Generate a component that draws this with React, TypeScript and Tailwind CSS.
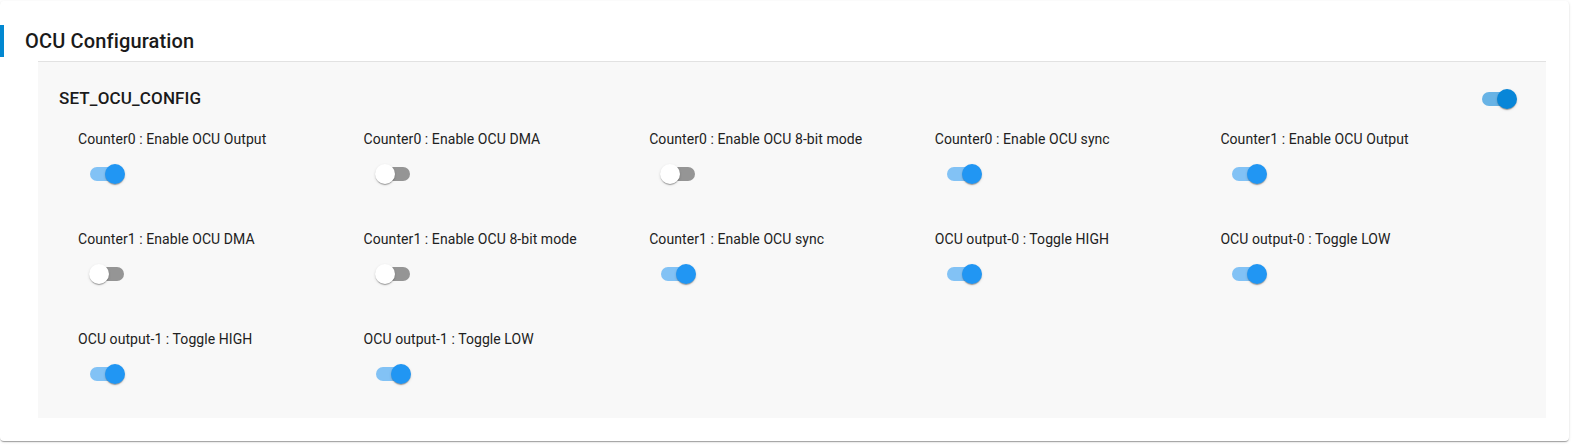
type SwitchProps = { on: boolean; dark?: boolean };

function Toggle({ on, dark }: SwitchProps) {
  const thumbOn = dark ? "bg-[#0886d8]" : "bg-[#2196f3]";
  const trackOn = dark ? "bg-[#0886d8]/60" : "bg-[#2196f3]/55";
  return (
    <div className="relative w-[58px] h-[38px] shrink-0">
      <div
        className={
          "absolute left-[12px] top-[12px] w-[34px] h-[14px] rounded-full " +
          (on ? trackOn : "bg-black/40")
        }
      />
      <div
        className={
          "absolute top-[9px] w-[20px] h-[20px] rounded-full shadow-[0_2px_1px_-1px_rgba(0,0,0,0.2),0_1px_1px_0_rgba(0,0,0,0.14),0_1px_3px_0_rgba(0,0,0,0.12)] " +
          (on ? "left-[27px] " + thumbOn : "left-[11px] bg-white")
        }
      />
    </div>
  );
}

const items: { label: string; on: boolean }[] = [
  { label: "Counter0 : Enable OCU Output", on: true },
  { label: "Counter0 : Enable OCU DMA", on: false },
  { label: "Counter0 : Enable OCU 8-bit mode", on: false },
  { label: "Counter0 : Enable OCU sync", on: true },
  { label: "Counter1 : Enable OCU Output", on: true },
  { label: "Counter1 : Enable OCU DMA", on: false },
  { label: "Counter1 : Enable OCU 8-bit mode", on: false },
  { label: "Counter1 : Enable OCU sync", on: true },
  { label: "OCU output-0 : Toggle HIGH", on: true },
  { label: "OCU output-0 : Toggle LOW", on: true },
  { label: "OCU output-1 : Toggle HIGH", on: true },
  { label: "OCU output-1 : Toggle LOW", on: true },
];

export default function App() {
  return (
    <div className="w-[1574px] h-[448px] bg-white font-['Roboto',sans-serif] text-[#212121] pt-[1px]">
      <div className="w-[1569px] h-[440px] bg-white rounded-[4px] shadow-[0_2px_1px_-1px_rgba(0,0,0,0.2),0_1px_1px_0_rgba(0,0,0,0.14),0_1px_3px_0_rgba(0,0,0,0.12)] pt-[24px]">
        <div className="h-8 flex items-center border-l-4 border-[#0288d1] pl-[21px]">
          <h2 className="text-[20px] font-medium leading-8 tracking-[0.15px] text-[#1a1a1a]">OCU Configuration</h2>
        </div>

        <div className="ml-[38px] mt-[4px] w-[1508px] h-[357px] bg-[#f8f8f8] border-t border-[#e2e2e2]">
          <div className="mt-[18px] flex items-center justify-between pl-[21px] pr-[18px] h-[38px]">
            <span className="text-[17px] font-medium tracking-[0.15px] text-[#1a1a1a]">SET_OCU_CONFIG</span>
            <Toggle on dark />
          </div>

          <div className="mt-[11px] ml-[40px] grid grid-cols-[repeat(5,285.6px)] gap-y-[36px]">
            {items.map((it) => (
              <div key={it.label} className="flex flex-col">
                <span className="text-[14px] leading-5 h-5 tracking-[0.07px]">{it.label}</span>
                <div className="mt-[6px]">
                  <Toggle on={it.on} />
                </div>
              </div>
            ))}
          </div>
        </div>
      </div>
    </div>
  );
}
